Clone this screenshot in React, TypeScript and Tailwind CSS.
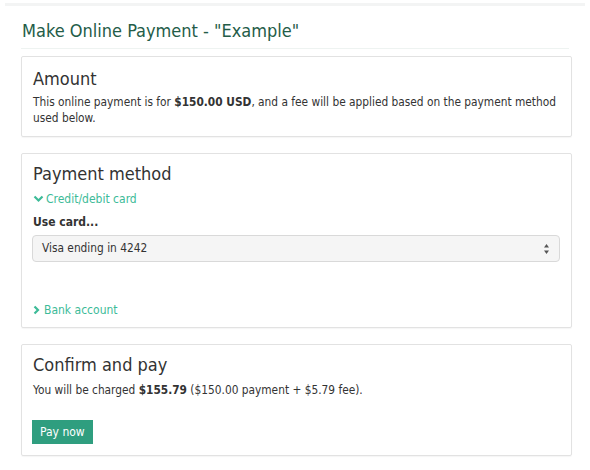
export default function App() {
  return (
    <div className="min-h-[470px] bg-white px-[21px] pt-[3px] font-['DejaVu_Sans_Condensed','DejaVu_Sans',sans-serif] text-[#333]">
      {/* faint top rule */}
      <div className="-mx-[16px] h-[3px] bg-[#f3f4f4]" />

      <h1 className="mt-[13px] border-b border-[#eef3f1] pb-[5px] pl-[1px] text-[18px] leading-[24px] text-[#245c48]">
        Make Online Payment - "Example"
      </h1>

      <div className="mt-[7px] flex w-[551px] flex-col gap-[16px]">
        {/* Amount */}
        <section className="rounded-[2px] border border-[#e2e2e2] px-[11px] pb-[10px] pt-[10px] shadow-[0_1px_1px_rgba(0,0,0,0.04)]">
          <h2 className="text-[18px] leading-[24px] text-[#333]">Amount</h2>
          <p className="mt-[3px] text-[11.8px] leading-[16px]">
            <span>This online payment is for </span>
            <b>$150.00 USD</b>
            <span>, and a fee will be applied based on the payment method</span>
            <br />
            <span>used below.</span>
          </p>
        </section>

        {/* Payment method */}
        <section className="rounded-[2px] border border-[#e2e2e2] px-[11px] pb-[9px] pt-[8px] shadow-[0_1px_1px_rgba(0,0,0,0.04)]">
          <h2 className="text-[18px] leading-[24px] text-[#333]">Payment method</h2>
          <div className="mt-[5px] flex items-center gap-[1px] text-[12px] leading-[16px] text-[#3dbb98]">
            <svg width="11" height="8" viewBox="0 0 11 8" className="mr-[1px]">
              <path d="M1.5 1.5 L5.5 5.5 L9.5 1.5" fill="none" stroke="#3dbb98" strokeWidth="2.2" />
            </svg>
            Credit/debit card
          </div>
          <div className="mt-[7px] text-[12px] font-bold leading-[16px]">Use card...</div>
          <div className="ml-[-1px] mt-[5px] flex h-[27px] items-center justify-between rounded-[4px] border border-[#d9d9d9] bg-[#f5f5f5] px-[9px] text-[11.8px]">
            <span>Visa ending in 4242</span>
            <svg width="7" height="12" viewBox="0 0 7 12">
              <path d="M3.5 1 L6 4.5 H1 Z" fill="#555" />
              <path d="M3.5 11 L6 7.5 H1 Z" fill="#555" />
            </svg>
          </div>
          <div className="mt-[40px] flex items-center gap-[4px] text-[12px] leading-[16px] text-[#3dbb98]">
            <svg width="7" height="10" viewBox="0 0 7 10">
              <path d="M1.5 1.5 L5 5 L1.5 8.5" fill="none" stroke="#3dbb98" strokeWidth="2.2" />
            </svg>
            Bank account
          </div>
        </section>

        {/* Confirm and pay */}
        <section className="rounded-[2px] border border-[#e2e2e2] px-[11px] pb-[11px] pt-[8px] shadow-[0_1px_1px_rgba(0,0,0,0.04)]">
          <h2 className="text-[18px] leading-[24px] text-[#333]">Confirm and pay</h2>
          <p className="mt-[5px] text-[11.8px] leading-[16px]">
            You will be charged <b>$155.79</b> ($150.00 payment + $5.79 fee).
          </p>
          <button className="ml-[-1px] mt-[22px] h-[24px] bg-[#2f9e7f] px-[8px] text-[12px] text-white">
            Pay now
          </button>
        </section>
      </div>
    </div>
  );
}
